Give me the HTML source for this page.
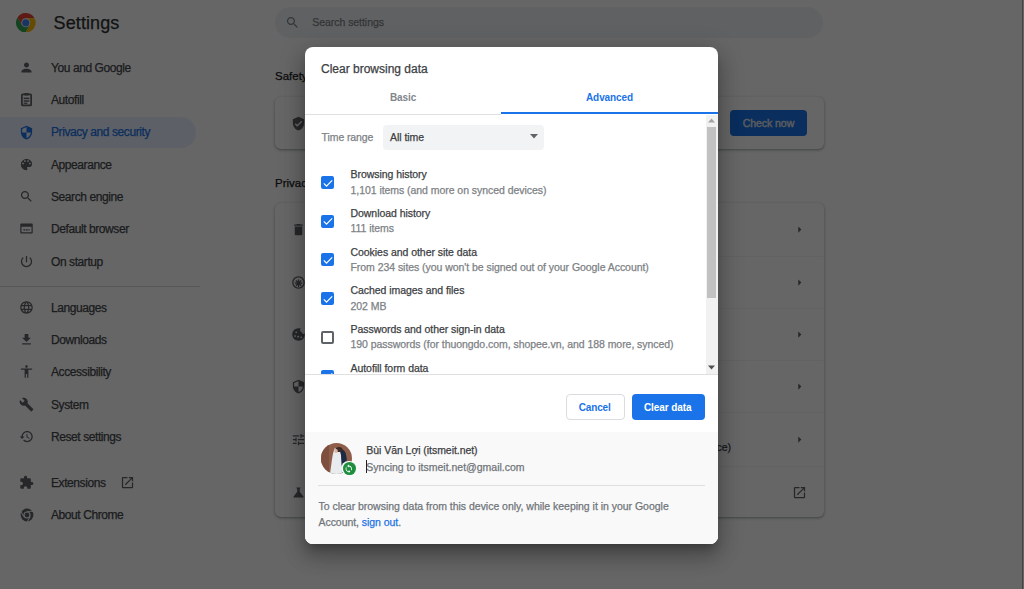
<!DOCTYPE html>
<html><head><meta charset="utf-8">
<style>
*{box-sizing:border-box;margin:0;padding:0}
html,body{width:1024px;height:589px;overflow:hidden;background:#fff;font-family:"Liberation Sans",sans-serif;color:#202124;position:relative}
.abs{position:absolute;display:block}
.t{position:absolute;white-space:nowrap;line-height:1;-webkit-text-stroke:0.25px currentColor}
.card{position:absolute;background:#fff;border-radius:6px;box-shadow:0 1px 2px rgba(60,64,67,.3),0 1px 3px 1px rgba(60,64,67,.15)}
.sep{position:absolute;height:1px;background:#e8eaed}
#overlay{left:0;top:0;width:1024px;height:589px;background:rgba(0,0,0,.6)}
#dlg{left:305px;top:47px;width:413px;height:497px;background:#fff;border-radius:8px;overflow:hidden;box-shadow:0 7px 8px -4px rgba(0,0,0,.25),0 13px 19px 2px rgba(0,0,0,.18),0 5px 24px 4px rgba(0,0,0,.15)}
.cb{position:absolute;left:16px;width:13px;height:13px;border-radius:2px;background:#1a73e8}
.cb svg{position:absolute;left:0.5px;top:0.5px;width:12px;height:12px}
</style></head><body>
<svg class="abs" style="left:16px;top:12.8px;width:19.6px;height:19.6px" viewBox="0 0 20 20">
  <path d="M10 5.4L18.88 5.4A10 10 0 0 0 1.57 4.61L6.02 12.3L10 10Z" fill="#ea4335"/>
  <path d="M10 5.4L18.88 5.4A10 10 0 0 0 1.57 4.61L6.02 12.3L10 10Z" fill="#fbbc04" transform="rotate(120 10 10)"/>
  <path d="M10 5.4L18.88 5.4A10 10 0 0 0 1.57 4.61L6.02 12.3L10 10Z" fill="#34a853" transform="rotate(240 10 10)"/>
  <circle cx="10" cy="10" r="4.6" fill="#fff"/>
  <circle cx="10" cy="10" r="3.7" fill="#4285f4"/>
</svg>
<div class="t" style="left:53.60px;top:13.66px;font-size:18px;color:#303134;font-weight:400;letter-spacing:0.1px;">Settings</div>
<div class="abs" style="left:275px;top:7px;width:548px;height:31px;border-radius:16px;background:#f1f3f4"></div>
<svg class="abs" style="left:284.80px;top:14.50px;width:15px;height:15px;" viewBox="0 0 24 24"><path fill="#80868b" d="M15.5 14h-.79l-.28-.27C15.41 12.59 16 11.11 16 9.5 16 5.91 13.09 3 9.5 3S3 5.91 3 9.5 5.91 16 9.5 16c1.610 0 3.09-.59 4.23-1.57l.27.28v.79l5 4.99L20.49 19l-4.99-5zm-6 0C7.01 14 5 11.99 5 9.5S7.01 5 9.5 5 14 7.01 14 9.5 11.99 14 9.5 14z"/></svg>
<div class="t" style="left:312.30px;top:17.41px;font-size:10.5px;color:#80868b;font-weight:400;letter-spacing:-0.05px;">Search settings</div>
<div class="abs" style="left:0;top:117px;width:196px;height:30.5px;border-radius:0 15.25px 15.25px 0;background:#e8f0fe"></div>
<div class="t" style="left:51.00px;top:61.74px;font-size:12px;color:#45484c;font-weight:400;letter-spacing:-0.42px;">You and Google</div>
<svg class="abs" style="left:19.00px;top:59.80px;width:15px;height:15px;" viewBox="0 0 24 24"><path fill="#5f6368" d="M12 12c2.21 0 4-1.79 4-4s-1.79-4-4-4-4 1.79-4 4 1.79 4 4 4zm0 2c-2.67 0-8 1.34-8 4v2h16v-2c0-2.66-5.33-4-8-4z"/></svg>
<div class="t" style="left:51.00px;top:94.04px;font-size:12px;color:#45484c;font-weight:400;letter-spacing:-0.42px;">Autofill</div>
<svg class="abs" style="left:19.00px;top:92.10px;width:15px;height:15px" viewBox="0 0 24 24"><rect x="4.6" y="3.8" width="14.8" height="17.6" rx="1.2" fill="none" stroke="#5f6368" stroke-width="2.8"/><rect x="8.5" y="1.6" width="7" height="4" rx="1" fill="#5f6368"/><rect x="7.5" y="9" width="9" height="2.4" fill="#5f6368"/><rect x="7.5" y="13.2" width="9" height="2.4" fill="#5f6368"/><rect x="7.5" y="17" width="6" height="2" fill="#5f6368"/></svg>
<div class="t" style="left:51.00px;top:126.44px;font-size:12px;color:#1a73e8;font-weight:400;letter-spacing:-0.42px;">Privacy and security</div>
<svg class="abs" style="left:19.00px;top:124.50px;width:15px;height:15px;" viewBox="0 0 24 24"><path fill="#1a73e8" d="M12 1L3 5v6c0 5.55 3.84 10.74 9 12 5.16-1.26 9-6.45 9-12V5l-9-4zm0 10.99h7c-.53 4.12-3.28 7.79-7 8.94V12H5V6.3l7-3.11v8.8z"/></svg>
<div class="t" style="left:51.00px;top:158.74px;font-size:12px;color:#45484c;font-weight:400;letter-spacing:-0.42px;">Appearance</div>
<svg class="abs" style="left:19.00px;top:156.80px;width:15px;height:15px;" viewBox="0 0 24 24"><path fill="#5f6368" d="M12 3c-4.97 0-9 4.03-9 9s4.03 9 9 9c.83 0 1.5-.67 1.5-1.5 0-.39-.15-.74-.39-1.01-.23-.26-.38-.61-.38-.99 0-.83.67-1.5 1.5-1.5H16c2.76 0 5-2.24 5-5 0-4.42-4.03-8-9-8zm-5.5 9c-.83 0-1.5-.67-1.5-1.5S5.670 9 6.5 9 8 9.67 8 10.5 7.33 12 6.5 12zm3-4C8.67 8 8 7.33 8 6.5S8.67 5 9.5 5s1.5.67 1.5 1.5S10.33 8 9.5 8zm5 0c-.83 0-1.5-.67-1.5-1.5S13.67 5 14.5 5s1.5.67 1.5 1.5S15.33 8 14.5 8zm3 4c-.83 0-1.5-.67-1.5-1.5S16.67 9 17.5 9s1.5.67 1.5 1.5-.67 1.5-1.5 1.5z"/></svg>
<div class="t" style="left:51.00px;top:191.04px;font-size:12px;color:#45484c;font-weight:400;letter-spacing:-0.42px;">Search engine</div>
<svg class="abs" style="left:19.00px;top:189.10px;width:15px;height:15px;" viewBox="0 0 24 24"><path fill="#5f6368" d="M15.5 14h-.79l-.28-.27C15.41 12.59 16 11.11 16 9.5 16 5.91 13.09 3 9.5 3S3 5.91 3 9.5 5.91 16 9.5 16c1.610 0 3.09-.59 4.23-1.57l.27.28v.79l5 4.99L20.49 19l-4.99-5zm-6 0C7.01 14 5 11.99 5 9.5S7.01 5 9.5 5 14 7.01 14 9.5 11.99 14 9.5 14z"/></svg>
<div class="t" style="left:51.00px;top:223.34px;font-size:12px;color:#45484c;font-weight:400;letter-spacing:-0.42px;">Default browser</div>
<svg class="abs" style="left:19.00px;top:221.40px;width:15px;height:15px;" viewBox="0 0 24 24"><path fill="#5f6368" d="M20 4H4c-1.1 0-2 .9-2 2v12c0 1.1.9 2 2 2h16c1.1 0 2-.9 2-2V6c0-1.1-.9-2-2-2zm0 14H4V9h16v9zM7 13h3v2H7zm4 0h3v2h-3zm4 0h2v2h-2z"/></svg>
<div class="t" style="left:51.00px;top:255.74px;font-size:12px;color:#45484c;font-weight:400;letter-spacing:-0.42px;">On startup</div>
<svg class="abs" style="left:19.00px;top:253.80px;width:15px;height:15px;" viewBox="0 0 24 24"><path fill="#5f6368" d="M13 3h-2v10h2V3zm4.83 2.17l-1.42 1.42C17.99 7.86 19 9.81 19 12c0 3.87-3.13 7-7 7s-7-3.13-7-7c0-2.19 1.01-4.14 2.58-5.42L6.17 5.17C4.23 6.82 3 9.26 3 12c0 4.97 4.03 9 9 9s9-4.03 9-9c0-2.74-1.23-5.18-3.17-6.83z"/></svg>
<div class="t" style="left:51.00px;top:301.74px;font-size:12px;color:#45484c;font-weight:400;letter-spacing:-0.42px;">Languages</div>
<svg class="abs" style="left:19.00px;top:299.80px;width:15px;height:15px;" viewBox="0 0 24 24"><path fill="#5f6368" d="M11.99 2C6.47 2 2 6.48 2 12s4.47 10 9.99 10C17.52 22 22 17.52 22 12S17.52 2 11.99 2zm6.93 6h-2.95c-.32-1.25-.78-2.45-1.38-3.56 1.84.63 3.37 1.910 4.33 3.56zM12 4.04c.83 1.2 1.48 2.53 1.91 3.96h-3.82c.43-1.43 1.08-2.76 1.91-3.96zM4.26 14C4.1 13.36 4 12.69 4 12s.1-1.36.26-2h3.38c-.08.66-.14 1.32-.14 2 0 .68.06 1.34.14 2H4.26zm.82 2h2.95c.32 1.25.78 2.45 1.38 3.56-1.84-.63-3.37-1.9-4.33-3.56zm2.95-8H5.08c.96-1.66 2.49-2.93 4.33-3.56C8.81 5.55 8.35 6.75 8.03 8zM12 19.96c-.83-1.2-1.48-2.53-1.91-3.96h3.82c-.43 1.43-1.08 2.76-1.91 3.96zM14.34 14H9.66c-.09-.66-.16-1.32-.16-2 0-.68.07-1.35.16-2h4.68c.09.65.16 1.32.16 2 0 .68-.07 1.34-.16 2zm.25 5.56c.6-1.11 1.06-2.31 1.38-3.56h2.95c-.96 1.65-2.49 2.93-4.33 3.56zM16.36 14c.08-.66.14-1.32.14-2 0-.68-.06-1.34-.14-2h3.38c.16.64.26 1.31.26 2s-.1 1.36-.26 2h-3.38z"/></svg>
<div class="t" style="left:51.00px;top:334.04px;font-size:12px;color:#45484c;font-weight:400;letter-spacing:-0.42px;">Downloads</div>
<svg class="abs" style="left:19.00px;top:332.10px;width:15px;height:15px;" viewBox="0 0 24 24"><path fill="#5f6368" d="M19 9h-4V3H9v6H5l7 7 7-7zM5 18v2h14v-2H5z"/></svg>
<div class="t" style="left:51.00px;top:366.34px;font-size:12px;color:#45484c;font-weight:400;letter-spacing:-0.42px;">Accessibility</div>
<svg class="abs" style="left:19.00px;top:364.40px;width:15px;height:15px;" viewBox="0 0 24 24"><path fill="#5f6368" d="M12 2c1.1 0 2 .9 2 2s-.9 2-2 2-2-.9-2-2 .9-2 2-2zm9 7h-6v13h-2v-6h-2v6H9V9H3V7h18v2z"/></svg>
<div class="t" style="left:51.00px;top:398.64px;font-size:12px;color:#45484c;font-weight:400;letter-spacing:-0.42px;">System</div>
<svg class="abs" style="left:19.00px;top:396.70px;width:15px;height:15px;" viewBox="0 0 24 24"><path fill="#5f6368" d="M22.7 19l-9.1-9.1c.9-2.3.4-5-1.5-6.9-2-2-5-2.4-7.4-1.3L9 6 6 9 1.6 4.7C.4 7.1.9 10.1 2.9 12.1c1.9 1.9 4.6 2.4 6.9 1.5l9.1 9.1c.4.4 1 .4 1.4 0l2.3-2.3c.5-.4.5-1.1.1-1.4z"/></svg>
<div class="t" style="left:51.00px;top:431.04px;font-size:12px;color:#45484c;font-weight:400;letter-spacing:-0.42px;">Reset settings</div>
<svg class="abs" style="left:19.00px;top:429.10px;width:15px;height:15px;" viewBox="0 0 24 24"><path fill="#5f6368" d="M13 3c-4.97 0-9 4.03-9 9H1l3.89 3.89.07.14L9 12H6c0-3.87 3.13-7 7-7s7 3.13 7 7-3.13 7-7 7c-1.93 0-3.68-.79-4.94-2.06l-1.42 1.42C8.27 19.99 10.51 21 13 21c4.97 0 9-4.03 9-9s-4.03-9-9-9zm-1 5v5l4.28 2.54.72-1.21-3.5-2.08V8H12z"/></svg>
<div class="t" style="left:51.00px;top:477.04px;font-size:12px;color:#45484c;font-weight:400;letter-spacing:-0.42px;">Extensions</div>
<svg class="abs" style="left:19.00px;top:475.10px;width:15px;height:15px;" viewBox="0 0 24 24"><path fill="#5f6368" d="M20.5 11H19V7c0-1.1-.9-2-2-2h-4V3.5C13 2.12 11.88 1 10.5 1S8 2.12 8 3.5V5H4c-1.1 0-1.99.9-1.99 2v3.8H3.5c1.49 0 2.7 1.21 2.7 2.7s-1.21 2.7-2.7 2.7H2V20c0 1.1.9 2 2 2h3.8v-1.5c0-1.49 1.21-2.7 2.7-2.7 1.49 0 2.7 1.21 2.7 2.7V22H17c1.1 0 2-.9 2-2v-4h1.5c1.38 0 2.5-1.12 2.5-2.5S21.88 11 20.5 11z"/></svg>
<div class="t" style="left:51.00px;top:509.34px;font-size:12px;color:#45484c;font-weight:400;letter-spacing:-0.42px;">About Chrome</div>
<svg class="abs" style="left:18.50px;top:506.90px;width:16px;height:16px" viewBox="0 0 24 24"><circle cx="12" cy="12" r="9.6" fill="#5f6368"/><circle cx="12" cy="12" r="5.4" fill="#fff"/><circle cx="12" cy="12" r="3.6" fill="#5f6368"/><g stroke="#fff" stroke-width="1.3"><path d="M12 6.6L21 6.6"/><path d="M12 6.6L21 6.6" transform="rotate(120 12 12)"/><path d="M12 6.6L21 6.6" transform="rotate(240 12 12)"/></g></svg>
<svg class="abs" style="left:119.50px;top:474.50px;width:15px;height:15px;" viewBox="0 0 24 24"><path fill="#5f6368" d="M19 19H5V5h7V3H5c-1.11 0-2 .9-2 2v14c0 1.1.89 2 2 2h14c1.1 0 2-.9 2-2v-7h-2v7zM14 3v2h3.59l-9.83 9.83 1.41 1.41L19 6.41V10h2V3h-7z"/></svg>
<div class="sep" style="left:0;top:285.5px;width:200px;background:#dadce0"></div>
<div class="t" style="left:275.00px;top:70.87px;font-size:11.5px;color:#202124;font-weight:400;letter-spacing:0px;">Safety check</div>
<div class="card" style="left:275px;top:96.5px;width:548.5px;height:52.5px"></div>
<svg class="abs" style="left:290.50px;top:115.50px;width:15px;height:15px;" viewBox="0 0 24 24"><path fill="#5f6368" d="M12 1L3 5v6c0 5.55 3.84 10.74 9 12 5.16-1.26 9-6.45 9-12V5l-9-4zm-2 16l-4-4 1.41-1.41L10 14.17l6.59-6.59L18 9l-8 8z"/></svg>
<div class="abs" style="left:730px;top:110px;width:77px;height:26px;border-radius:4px;background:#1a73e8"></div>
<div class="t" style="left:742.70px;top:118.01px;font-size:10.5px;color:#e8eaed;font-weight:400;letter-spacing:-0.05px;-webkit-text-stroke:0.35px #e8eaed;">Check now</div>
<div class="t" style="left:275.00px;top:177.77px;font-size:11.5px;color:#202124;font-weight:400;letter-spacing:0px;">Privacy and security</div>
<div class="card" style="left:275px;top:203px;width:548.5px;height:314px"></div>
<svg class="abs" style="left:290.50px;top:221.50px;width:15px;height:15px;" viewBox="0 0 24 24"><path fill="#5f6368" d="M6 19c0 1.1.9 2 2 2h8c1.1 0 2-.9 2-2V7H6v12zM19 4h-3.5l-1-1h-5l-1 1H5v2h14V4z"/></svg>
<svg class="abs" style="left:791.50px;top:221.50px;width:15px;height:15px;" viewBox="0 0 24 24"><path fill="#5f6368" d="M10 17l5-5-5-5v10z"/></svg>
<div class="sep" style="left:318px;top:256px;width:505px;background:#f5f5f5"></div>
<svg class="abs" style="left:290.50px;top:274.50px;width:15px;height:15px;" viewBox="0 0 24 24"><path fill="#5f6368" d="M12 2C6.48 2 2 6.48 2 12s4.48 10 10 10 10-4.48 10-10S17.52 2 12 2zm0 18c-4.41 0-8-3.59-8-8s3.59-8 8-8 8 3.59 8 8-3.59 8-8 8zm1-13h-2v3.59L8.46 8.05 7.05 9.46 9.59 12H6v2h3.59l-2.54 2.54 1.41 1.41L11 15.41V19h2v-3.59l2.54 2.54 1.41-1.41L14.41 14H18v-2h-3.59l2.54-2.54-1.41-1.41L13 10.59V7z"/></svg>
<svg class="abs" style="left:791.50px;top:274.50px;width:15px;height:15px;" viewBox="0 0 24 24"><path fill="#5f6368" d="M10 17l5-5-5-5v10z"/></svg>
<div class="sep" style="left:318px;top:308px;width:505px;background:#f5f5f5"></div>
<svg class="abs" style="left:290.50px;top:326.50px;width:15px;height:15px;" viewBox="0 0 24 24"><path fill="#5f6368" d="M12 2C6.48 2 2 6.48 2 12s4.48 10 10 10 10-4.48 10-10c0-.5-.04-.99-.11-1.47-.5.3-1.09.47-1.72.47-1.86 0-3.38-1.45-3.48-3.29C15.48 7.32 14.5 6.3 14.5 5c0-1.1.45-2.1 1.18-2.82C14.53 2.06 13.29 2 12 2zM8.5 7C9.33 7 10 7.67 10 8.5S9.33 10 8.5 10 7 9.33 7 8.5 7.67 7 8.5 7zm-2 6c.83 0 1.5.67 1.5 1.5S7.33 16 6.5 16 5 15.33 5 14.5 5.67 13 6.5 13zm5 1c.83 0 1.5.67 1.5 1.5s-.67 1.5-1.5 1.5-1.5-.67-1.5-1.5.67-1.5 1.5-1.5zm5 1c.83 0 1.5.67 1.5 1.5s-.67 1.5-1.5 1.5-1.5-.67-1.5-1.5.67-1.5 1.5-1.5z"/></svg>
<svg class="abs" style="left:791.50px;top:326.50px;width:15px;height:15px;" viewBox="0 0 24 24"><path fill="#5f6368" d="M10 17l5-5-5-5v10z"/></svg>
<div class="sep" style="left:318px;top:360px;width:505px;background:#f5f5f5"></div>
<svg class="abs" style="left:290.50px;top:378.50px;width:15px;height:15px;" viewBox="0 0 24 24"><path fill="#5f6368" d="M12 1L3 5v6c0 5.55 3.84 10.74 9 12 5.16-1.26 9-6.45 9-12V5l-9-4zm0 10.99h7c-.53 4.12-3.28 7.79-7 8.94V12H5V6.3l7-3.11v8.8z"/></svg>
<svg class="abs" style="left:791.50px;top:378.50px;width:15px;height:15px;" viewBox="0 0 24 24"><path fill="#5f6368" d="M10 17l5-5-5-5v10z"/></svg>
<div class="sep" style="left:318px;top:412px;width:505px;background:#f5f5f5"></div>
<svg class="abs" style="left:290.50px;top:431.50px;width:15px;height:15px;" viewBox="0 0 24 24"><path fill="#5f6368" d="M3 17v2h6v-2H3zM3 5v2h10V5H3zm10 16v-2h8v-2h-8v-2h-2v6h2zM7 9v2H3v2h4v2h2V9H7zm14 4v-2H11v2h10zm-6-4h2V7h4V5h-4V3h-2v6z"/></svg>
<svg class="abs" style="left:791.50px;top:431.50px;width:15px;height:15px;" viewBox="0 0 24 24"><path fill="#5f6368" d="M10 17l5-5-5-5v10z"/></svg>
<div class="sep" style="left:318px;top:466px;width:505px;background:#f5f5f5"></div>
<svg class="abs" style="left:290.50px;top:484.50px;width:15px;height:15px;" viewBox="0 0 24 24"><path fill="#5f6368" d="M19.8 18.4L14 10.67V6.5l1.35-1.69c.26-.33.03-.81-.39-.81H9.04c-.42 0-.65.48-.39.81L10 6.5v4.17L4.2 18.4c-.49.66-.02 1.6.8 1.6h14c.82 0 1.29-.94.8-1.6z"/></svg>
<svg class="abs" style="left:791.50px;top:484.50px;width:15px;height:15px;" viewBox="0 0 24 24"><path fill="#5f6368" d="M19 19H5V5h7V3H5c-1.11 0-2 .9-2 2v14c0 1.1.89 2 2 2h14c1.1 0 2-.9 2-2v-7h-2v7zM14 3v2h3.59l-9.83 9.83 1.41 1.41L19 6.41V10h2V3h-7z"/></svg>
<div class="t" style="left:716.50px;top:441.61px;font-size:10.5px;color:#3c4043;font-weight:400;letter-spacing:0px;">ce)</div>
<div class="abs" style="left:1022px;top:0;width:1px;height:589px;background:#a8a8a8"></div>
<div class="abs" id="overlay"></div>
<div class="abs" id="dlg">
<div class="t" style="left:16.00px;top:15.64px;font-size:12px;color:#3c4043;font-weight:400;letter-spacing:0px;">Clear browsing data</div>
<div class="t" style="left:85.00px;top:45.53px;font-size:10px;color:#80868b;font-weight:700;letter-spacing:-0.1px;-webkit-text-stroke:0;">Basic</div>
<div class="t" style="left:281.00px;top:45.53px;font-size:10px;color:#1a73e8;font-weight:700;letter-spacing:-0.1px;-webkit-text-stroke:0;">Advanced</div>
<div class="abs" style="left:0;top:66.5px;width:196px;height:1px;background:#e0e0e0"></div>
<div class="abs" style="left:196px;top:65px;width:217px;height:2px;background:#1a73e8"></div>
<div class="abs" style="left:0;top:327px;width:413px;height:1px;background:#e0e0e0"></div>
<div class="abs" style="left:400.5px;top:68px;width:12px;height:259px;background:#f1f1f1"></div>
<div class="abs" style="left:402px;top:80px;width:9px;height:171px;background:#c1c1c1"></div>
<svg class="abs" style="left:403px;top:71px;width:7px;height:5px" viewBox="0 0 7 5"><path d="M0 4.5L3.5 0.5L7 4.5Z" fill="#a3a3a3"/></svg>
<svg class="abs" style="left:403px;top:318px;width:7px;height:5px" viewBox="0 0 7 5"><path d="M0 0.5L3.5 4.5L7 0.5Z" fill="#505050"/></svg>
<div class="t" style="left:16.60px;top:84.81px;font-size:10.5px;color:#7d8185;font-weight:400;letter-spacing:-0.1px;">Time range</div>
<div class="abs" style="left:78px;top:77.8px;width:160.7px;height:25.1px;border-radius:4px;background:#f1f3f4"></div>
<div class="t" style="left:85.00px;top:84.81px;font-size:10.5px;color:#3c4043;font-weight:400;letter-spacing:-0.05px;">All time</div>
<svg class="abs" style="left:225px;top:87.2px;width:8px;height:4.5px" viewBox="0 0 8 4.5"><path d="M0 0L4 4.5L8 0Z" fill="#5f6368"/></svg>
<div class="cb" style="top:129.00px"><svg viewBox="0 0 24 24"><path fill="#fff" d="M9 16.6L4.4 12l-1.6 1.6L9 19.8 21.2 7.6 19.6 6z"/></svg></div>
<div class="t" style="left:45.50px;top:122.11px;font-size:10.5px;color:#3c4043;font-weight:400;letter-spacing:-0.05px;">Browsing history</div>
<div class="t" style="left:45.50px;top:137.61px;font-size:10.5px;color:#7d8185;font-weight:400;letter-spacing:-0.05px;">1,101 items (and more on synced devices)</div>
<div class="cb" style="top:167.70px"><svg viewBox="0 0 24 24"><path fill="#fff" d="M9 16.6L4.4 12l-1.6 1.6L9 19.8 21.2 7.6 19.6 6z"/></svg></div>
<div class="t" style="left:45.50px;top:160.81px;font-size:10.5px;color:#3c4043;font-weight:400;letter-spacing:-0.05px;">Download history</div>
<div class="t" style="left:45.50px;top:176.31px;font-size:10.5px;color:#7d8185;font-weight:400;letter-spacing:-0.05px;">111 items</div>
<div class="cb" style="top:206.40px"><svg viewBox="0 0 24 24"><path fill="#fff" d="M9 16.6L4.4 12l-1.6 1.6L9 19.8 21.2 7.6 19.6 6z"/></svg></div>
<div class="t" style="left:45.50px;top:199.51px;font-size:10.5px;color:#3c4043;font-weight:400;letter-spacing:-0.05px;">Cookies and other site data</div>
<div class="t" style="left:45.50px;top:215.01px;font-size:10.5px;color:#7d8185;font-weight:400;letter-spacing:-0.05px;">From 234 sites (you won&#39;t be signed out of your Google Account)</div>
<div class="cb" style="top:245.10px"><svg viewBox="0 0 24 24"><path fill="#fff" d="M9 16.6L4.4 12l-1.6 1.6L9 19.8 21.2 7.6 19.6 6z"/></svg></div>
<div class="t" style="left:45.50px;top:238.21px;font-size:10.5px;color:#3c4043;font-weight:400;letter-spacing:-0.05px;">Cached images and files</div>
<div class="t" style="left:45.50px;top:253.71px;font-size:10.5px;color:#7d8185;font-weight:400;letter-spacing:-0.05px;">202 MB</div>
<div class="cb" style="top:283.80px;background:#fff;border:2px solid #5f6368"></div>
<div class="t" style="left:45.50px;top:276.91px;font-size:10.5px;color:#3c4043;font-weight:400;letter-spacing:-0.05px;">Passwords and other sign-in data</div>
<div class="t" style="left:45.50px;top:292.41px;font-size:10.5px;color:#7d8185;font-weight:400;letter-spacing:-0.05px;">190 passwords (for thuongdo.com, shopee.vn, and 188 more, synced)</div>
<div class="cb" style="top:322.50px"><svg viewBox="0 0 24 24"><path fill="#fff" d="M9 16.6L4.4 12l-1.6 1.6L9 19.8 21.2 7.6 19.6 6z"/></svg></div>
<div class="t" style="left:45.50px;top:315.61px;font-size:10.5px;color:#3c4043;font-weight:400;letter-spacing:-0.05px;">Autofill form data</div>
<div class="abs" style="left:0;top:327.5px;width:413px;height:170px;background:#fff"></div>
<div class="abs" style="left:0;top:327px;width:413px;height:1px;background:#e0e0e0"></div>
<div class="abs" style="left:260.6px;top:347.4px;width:59px;height:25.2px;border-radius:4px;border:1px solid #dadce0;background:#fff"></div>
<div class="t" style="left:273.75px;top:355.94px;font-size:10px;color:#1a73e8;font-weight:700;letter-spacing:-0.15px;-webkit-text-stroke:0;">Cancel</div>
<div class="abs" style="left:326.6px;top:347.4px;width:73px;height:25.2px;border-radius:4px;background:#1a73e8"></div>
<div class="t" style="left:339.00px;top:355.94px;font-size:10px;color:#fff;font-weight:700;letter-spacing:-0.1px;-webkit-text-stroke:0;">Clear data</div>
<div class="abs" style="left:0;top:384.8px;width:413px;height:112.2px;background:#f9f9f9"></div>
<svg class="abs" style="left:16px;top:395.9px;width:31px;height:31px" viewBox="0 0 31 31">
<defs><clipPath id="cc"><circle cx="15.5" cy="15.5" r="15.5"/></clipPath></defs>
<g clip-path="url(#cc)">
<rect width="31" height="31" fill="#8f5e4b"/>
<rect x="0" y="0" width="8" height="31" fill="#7e4f3e"/>
<path d="M14 5 C11.5 9 11 18 9 31 L23 31 C22 22 20.5 14 19 8 Z" fill="#e9ecef"/>
<path d="M19 6 C23 6 25 9 25.5 14 L26.5 28 L21 31 L20 12 Z" fill="#1c2a44"/>
<ellipse cx="18" cy="6.5" rx="3.5" ry="2.6" fill="#3a2a28"/>
<ellipse cx="15" cy="8" rx="1.8" ry="2" fill="#d9b8a8"/>
</g></svg>
<div class="abs" style="left:36.4px;top:413.5px;width:15.6px;height:15.6px;border-radius:50%;background:#f9f9f9"></div>
<div class="abs" style="left:37.8px;top:414.9px;width:12.8px;height:12.8px;border-radius:50%;background:#1e8e3e"></div>
<svg class="abs" style="left:39.45px;top:416.55px;width:9.5px;height:9.5px;" viewBox="0 0 24 24"><path fill="#fff" d="M12 4V1L8 5l4 4V6c3.31 0 6 2.69 6 6 0 1.01-.25 1.97-.7 2.8l1.46 1.46C19.54 15.03 20 13.57 20 12c0-4.42-3.58-8-8-8zm0 14c-3.31 0-6-2.69-6-6 0-1.01.25-1.97.7-2.8L5.24 7.74C4.46 8.97 4 10.43 4 12c0 4.42 3.58 8 8 8v3l4-4-4-4v3z"/></svg>
<div class="t" style="left:61.30px;top:398.11px;font-size:10.5px;color:#3c4043;font-weight:400;letter-spacing:-0.05px;">Bùi Văn Lợi (itsmeit.net)</div>
<div class="t" style="left:61.30px;top:414.91px;font-size:10.5px;color:#70757a;font-weight:400;letter-spacing:0px;">Syncing to itsmeit.net@gmail.com</div>
<div class="abs" style="left:61px;top:413px;width:1px;height:13px;background:#202124"></div>
<div class="abs" style="left:13px;top:437.8px;width:387px;height:1px;background:#e0e0e0"></div>
<div class="t" style="left:13.50px;top:453.81px;font-size:10.5px;color:#70757a;font-weight:400;letter-spacing:-0.02px;">To clear browsing data from this device only, while keeping it in your Google</div>
<div class="t" style="left:13.50px;top:469.81px;font-size:10.5px;color:#70757a;font-weight:400;letter-spacing:-0.05px;">Account, <span style="color:#1a73e8">sign out</span>.</div>
</div>
</body></html>
